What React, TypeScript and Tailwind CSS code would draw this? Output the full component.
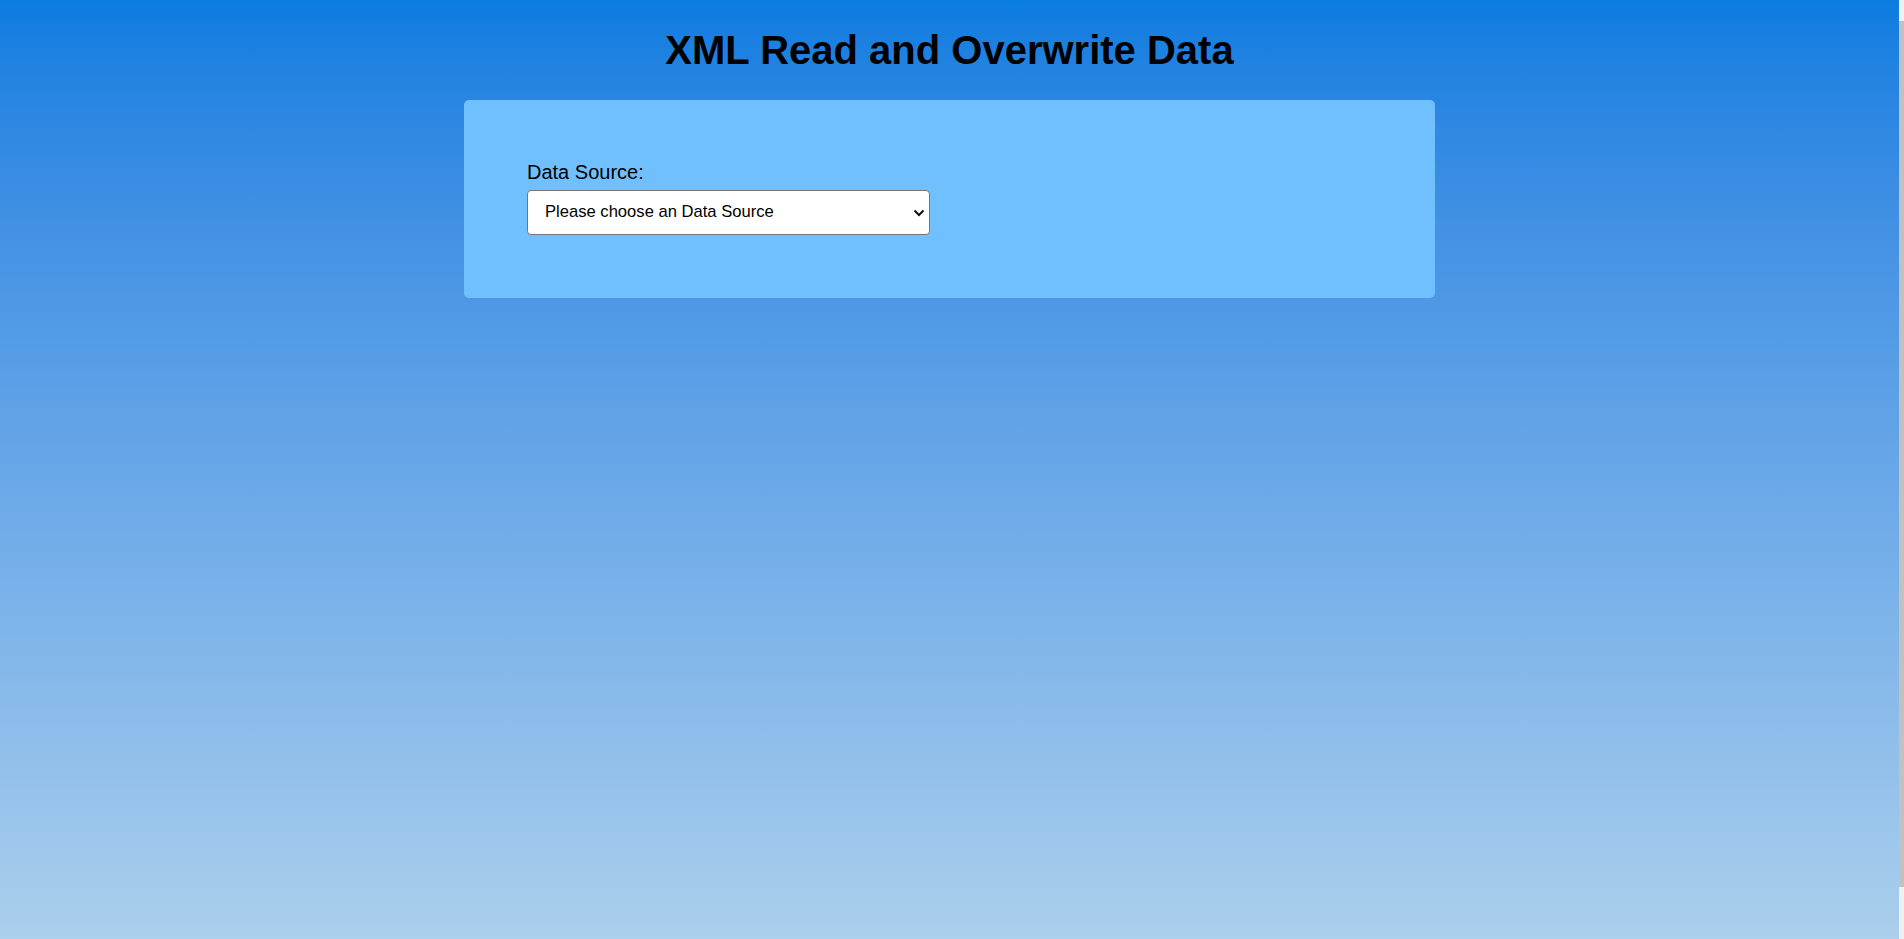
import { useState } from "react";

const DATA_SOURCES = ["Please choose an Data Source", "Customers.xml", "Orders.xml", "Products.xml"];

const DataSourceSelect = () => {
  const [value, setValue] = useState(DATA_SOURCES[0]);

  return (
    <div className="relative w-[403px]">
      <select
        value={value}
        onChange={(e) => setValue(e.target.value)}
        className="block w-full h-[45px] appearance-none rounded-[4px] border border-[#767676] bg-white pl-[17px] pr-8 text-[16.6px] text-black outline-none"
      >
        {DATA_SOURCES.map((item) => (
          <option key={item} value={item}>
            {item}
          </option>
        ))}
      </select>
      <svg
        className="pointer-events-none absolute right-[5px] top-[19px]"
        width="12"
        height="8"
        viewBox="0 0 12 8"
        fill="none"
      >
        <path d="M1.5 1.5 L6 6 L10.5 1.5" stroke="#111" strokeWidth="2" />
      </svg>
    </div>
  );
};

const App = () => {
  return (
    <div className="flex h-screen w-full overflow-hidden font-['Liberation_Sans',Arial,sans-serif]">
      <main className="flex flex-1 flex-col items-center bg-gradient-to-b from-[#0a7ce0] to-[#abcfec]">
        <h1 className="mt-[27px] mb-[27px] text-[40px] leading-[46px] font-bold text-black">
          XML Read and Overwrite Data
        </h1>
        <section className="w-[971px] rounded-[5px] bg-[#70bfff] pt-[61px] pb-[63px] pl-[63px]">
          <label className="mb-[6px] block text-[20px] leading-[23px] text-black">
            Data Source:
          </label>
          <DataSourceSelect />
        </section>
      </main>
      <div className="flex w-[5px] justify-end bg-[#f0f0f0] pt-[21px] pb-[52px]">
        <div className="w-[3px] flex-1 bg-[#c1c1c1]" />
      </div>
    </div>
  );
};

export default App;
